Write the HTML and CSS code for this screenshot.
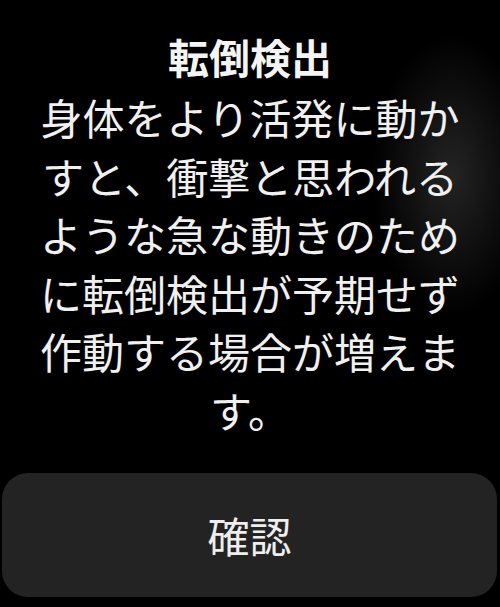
FILE: index.html
```html
<!DOCTYPE html>
<html lang="ja">
<head>
    <meta charset="UTF-8">
    <meta name="viewport" content="width=device-width, initial-scale=1.0">
    <title>転倒検出</title>
    <link rel="stylesheet" href="styles.css">
</head>
<body>

    <div class="screen">
        <h2 class="title">転倒検出</h2>
        <p class="message">身体をより活発に動かすと、衝撃と思われるような急な動きのために転倒検出が予期せず作動する場合が増えます。</p>

        <button class="confirm-button">確認</button>
    </div>

</body>
</html>
```

FILE: styles.css
```css
body {
    margin: 0;
    background-color: #000;
    font-family: "Noto Sans CJK JP", "Noto Sans", sans-serif;
}
.screen {
    width: 500px;
    height: 607px;
    display: flex;
    flex-direction: column;
    align-items: center;
    box-sizing: border-box;
    padding-top: 36px;
    background: radial-gradient(ellipse 80px 140px at 452px 175px, rgba(255, 255, 255, 0.14), rgba(255, 255, 255, 0) 100%), #000;
}
.title {
    margin: 0;
    color: #f4f4f4;
    font-size: 41px;
    line-height: 41px;
    font-weight: 700;
}
.message {
    margin: 11px 0 0;
    padding: 0 38px;
    color: #f0f0f0;
    font-size: 42px;
    line-height: 58.6px;
    text-align: center;
}
.confirm-button {
    margin: 33px 3px 0 2px;
    width: 495px;
    height: 124px;
    background-color: #232323;
    color: #eee;
    border: none;
    border-radius: 26px;
    font-family: inherit;
    font-size: 42px;
    padding: 0;
}
```
